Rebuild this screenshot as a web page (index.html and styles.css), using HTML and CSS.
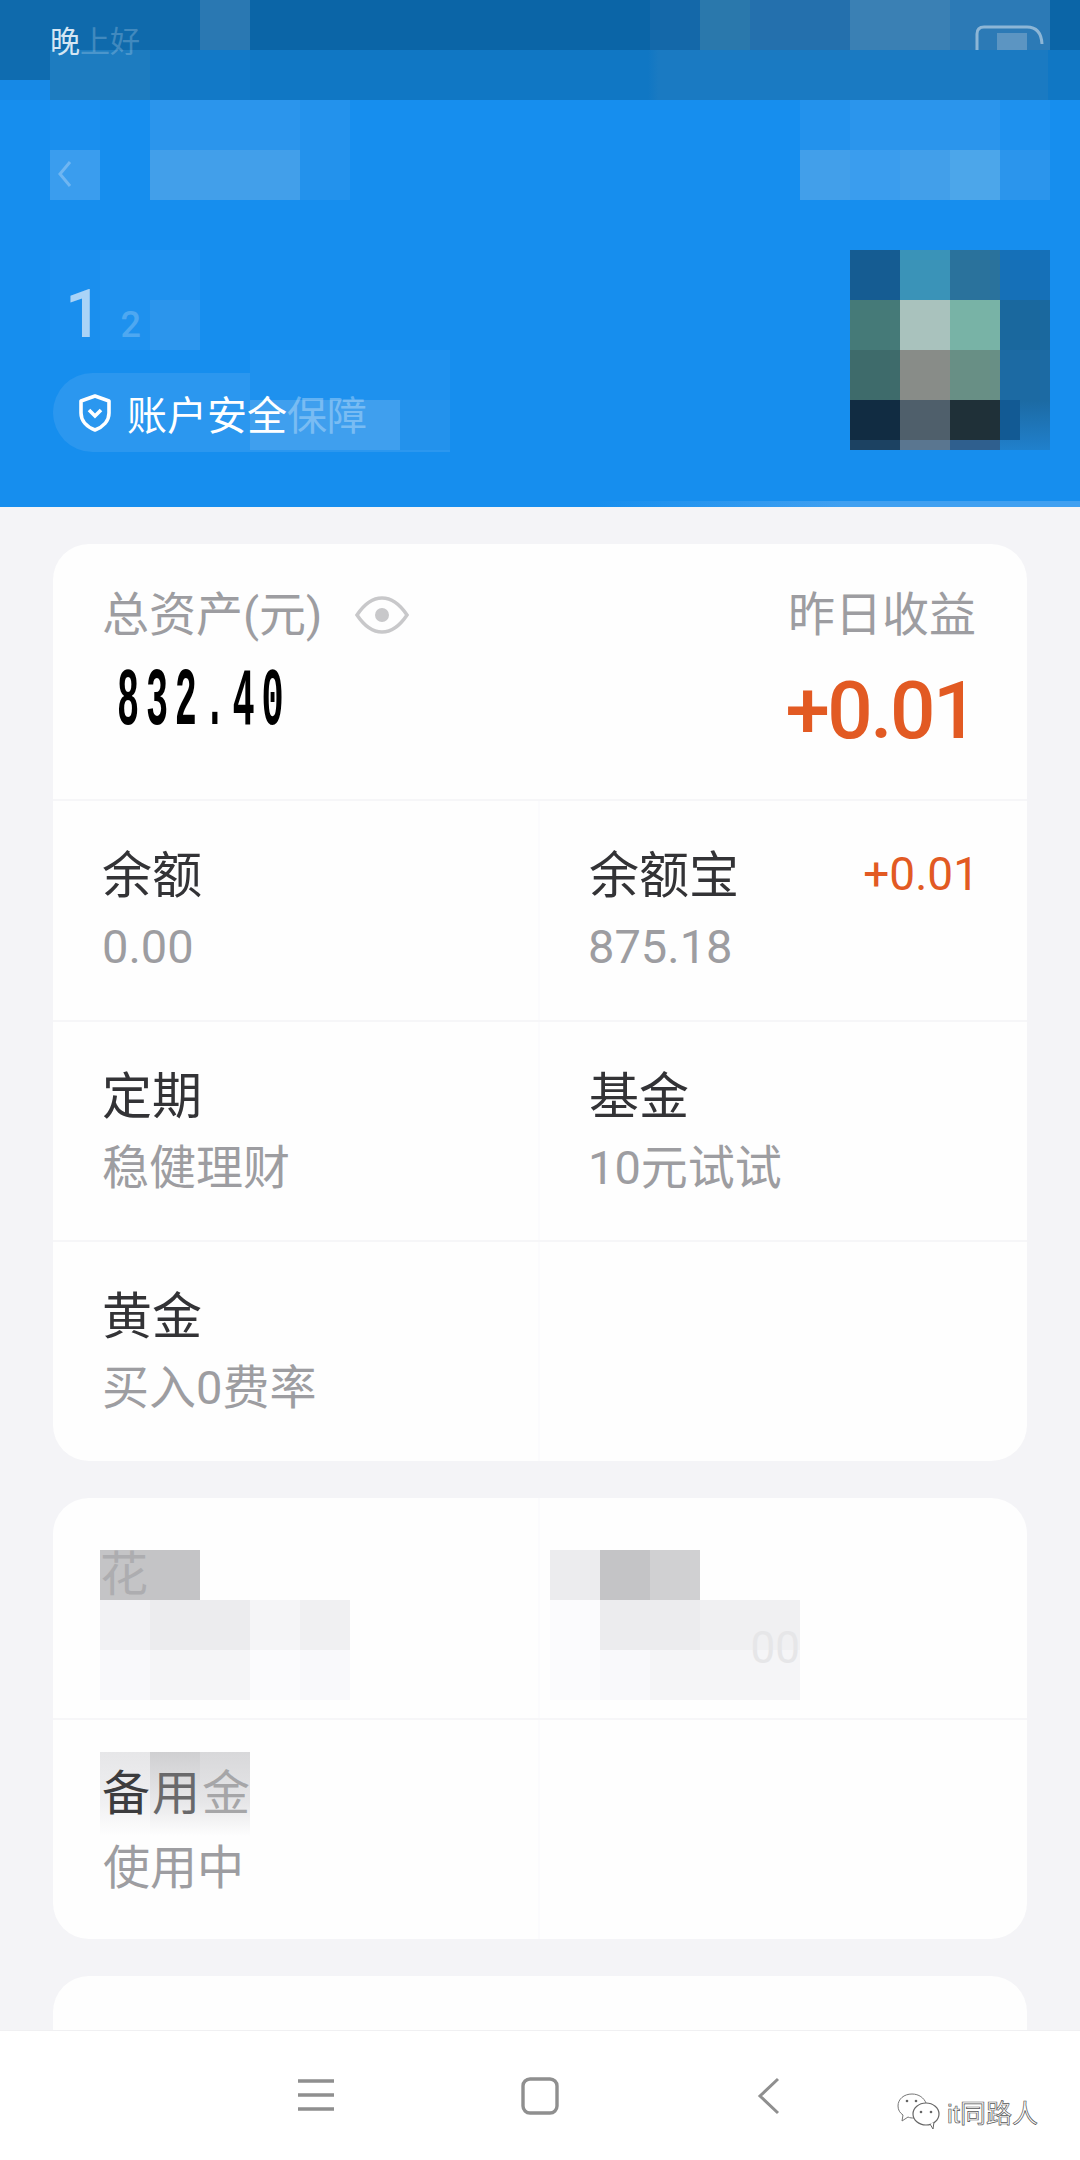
FILE: index.html
```html
<!DOCTYPE html><html lang="zh-CN">
<head>
  <meta charset="UTF-8">
  <title>总资产</title>
  <link rel="stylesheet" href="styles.css">
</head>
<body>
  <header class="top">
    <div class="statusbar">
      <div class="status-row">
        <div class="tile t-s1"></div><div class="tile t-s1 status-time">晚<span class="status-fade">上好</span></div><div class="tile t-s1"></div><div class="tile t-s1"></div><div class="tile t-s3"></div>
        <div class="status-gap"></div>
        <div class="tile t-s4"></div><div class="tile t-s5"></div><div class="tile t-s6"></div><div class="tile t-s6"></div><div class="tile t-s7"></div><div class="tile t-s7"></div>
        <div class="tile tile-wide t-s8">
          <svg class="battery" viewBox="0 0 70 26" width="70" height="26">
            <path d="M2 26 V10 Q2 3 9 3 H52 Q66 3 67 20" fill="none" stroke="#8db6d6" stroke-width="3"/>
            <rect x="22" y="9" width="30" height="17" fill="#5c95c2"/>
          </svg>
        </div>
      </div>
      <div class="status-row status-row-low">
        <div class="tile t-corner"></div><div class="tile t-s9"></div><div class="tile t-s9"></div><div class="tile t-s10"></div><div class="tile t-s10"></div>
      </div>
    </div>

    <div class="nav-blur">
      <div class="mosaic cols-6">
        <div class="tile t-b0"></div><div class="tile"></div><div class="tile t-b3"></div><div class="tile t-b3"></div><div class="tile t-b3"></div><div class="tile t-b2"></div>
        <div class="tile t-b4 back">
          <svg viewBox="0 0 14 28" width="14" height="28"><path d="M12 2 L2 14 L12 26" fill="none" stroke="#6fb6f2" stroke-width="3"/></svg>
        </div><div class="tile"></div><div class="tile t-b5"></div><div class="tile t-b5"></div><div class="tile t-b5"></div><div class="tile t-b2"></div>
      </div>
      <div class="mosaic cols-5">
        <div class="tile t-b2"></div><div class="tile t-b3"></div><div class="tile t-b3"></div><div class="tile t-b3"></div><div class="tile t-b1"></div>
        <div class="tile t-b5"></div><div class="tile t-b4"></div><div class="tile t-b5"></div><div class="tile t-b6"></div><div class="tile t-b3"></div>
      </div>
    </div>

    <div class="account">
      <div class="account-left">
        <div class="mosaic cols-3">
          <div class="tile t-b0"></div><div class="tile t-b1"></div><div class="tile t-b1"></div>
          <div class="tile t-b0 account-num">1<span class="account-rest">2</span></div><div class="tile t-b1"></div><div class="tile t-b3"></div>
        </div>
        <div class="pill">
          <svg class="shield" viewBox="0 0 34 38" width="34" height="38">
            <path d="M17 2 L31 7 V19 C31 27 25 33 17 36 C9 33 3 27 3 19 V7 Z" fill="none" stroke="#fff" stroke-width="3.6" stroke-linejoin="round"/>
            <path d="M11 16 L17 22 L23 16" fill="none" stroke="#fff" stroke-width="3.6"/>
          </svg>
          <span class="pill-text">账户安全<span class="pill-fade">保障</span></span>
          <div class="pill-blur">
            <div class="tile t-b1"></div><div class="tile t-b1"></div><div class="tile t-b1"></div><div class="tile t-b1"></div>
            <div class="tile t-b7"></div><div class="tile t-b7"></div><div class="tile t-b7"></div><div class="tile t-b2"></div>
          </div>
        </div>
      </div>
      <div class="mosaic cols-4 avatar">
        <div class="tile a1"></div><div class="tile a2"></div><div class="tile a3"></div><div class="tile a4"></div>
        <div class="tile a5"></div><div class="tile a6"></div><div class="tile a7"></div><div class="tile a8"></div>
        <div class="tile a9"></div><div class="tile a10"></div><div class="tile a11"></div><div class="tile a12"></div>
        <div class="tile a13"></div><div class="tile a14"></div><div class="tile a15"></div><div class="tile a16"></div>
      </div>
    </div>
  </header>

  <main class="content">
    <section class="card">
      <div class="summary">
        <div class="summary-line">
          <div class="summary-label">总资产(元)
            <svg class="eye" viewBox="0 0 54 38" width="54" height="38">
              <path d="M2 19 C10 7 18 2 27 2 C36 2 44 7 52 19 C44 31 36 36 27 36 C18 36 10 31 2 19 Z" fill="none" stroke="#c8c8ca" stroke-width="3.5"/>
              <circle cx="27" cy="19" r="7" fill="#c8c8ca"/>
            </svg>
          </div>
          <div class="summary-label">昨日收益</div>
        </div>
        <div class="summary-line summary-values">
          <div class="total">832.40</div>
          <div class="gain">+0.01</div>
        </div>
      </div>

      <div class="row">
        <div class="cell">
          <div class="cell-title">余额</div>
          <div class="cell-sub">0.00</div>
        </div>
        <div class="cell">
          <div class="cell-head"><div class="cell-title">余额宝</div><div class="cell-gain">+0.01</div></div>
          <div class="cell-sub">875.18</div>
        </div>
      </div>
      <div class="row">
        <div class="cell">
          <div class="cell-title">定期</div>
          <div class="cell-sub">稳健理财</div>
        </div>
        <div class="cell">
          <div class="cell-title">基金</div>
          <div class="cell-sub">10元试试</div>
        </div>
      </div>
      <div class="row">
        <div class="cell">
          <div class="cell-title">黄金</div>
          <div class="cell-sub">买入0费率</div>
        </div>
        <div class="cell"></div>
      </div>
    </section>

    <section class="card">
      <div class="row row-first">
        <div class="cell cell-blur">
          <div class="mosaic cols-5">
            <div class="tile g3 blur-char">花</div><div class="tile g3"></div><div class="tile"></div><div class="tile"></div><div class="tile"></div>
            <div class="tile g6"></div><div class="tile g1"></div><div class="tile g1"></div><div class="tile g2"></div><div class="tile g7"></div>
            <div class="tile g4"></div><div class="tile g2"></div><div class="tile g2"></div><div class="tile g8"></div><div class="tile g4"></div>
          </div>
        </div>
        <div class="cell cell-blur">
          <div class="mosaic cols-5">
            <div class="tile g1"></div><div class="tile g3"></div><div class="tile g5"></div><div class="tile"></div><div class="tile"></div>
            <div class="tile g8"></div><div class="tile g1"></div><div class="tile g1"></div><div class="tile g7"></div><div class="tile g7 blur-zero">00</div>
            <div class="tile g8"></div><div class="tile g4"></div><div class="tile g2"></div><div class="tile g2"></div><div class="tile g2"></div>
          </div>
        </div>
      </div>
      <div class="row">
        <div class="cell cell-spare">
          <div class="spare-title"><span class="spare-a">备</span><span class="spare-b">用</span><span class="spare-c">金</span></div>
          <div class="cell-sub">使用中</div>
        </div>
        <div class="cell"></div>
      </div>
    </section>

    <section class="card"></section>
  </main>

  <nav class="bottom">
    <svg viewBox="0 0 36 36" width="36" height="36">
      <path d="M0 4 H36 M0 18 H36 M0 32 H36" stroke="#8f8f8f" stroke-width="3.4"/>
    </svg>
    <svg viewBox="0 0 38 38" width="38" height="38">
      <rect x="2" y="2" width="34" height="34" rx="7" fill="none" stroke="#8f8f8f" stroke-width="3.4"/>
    </svg>
    <svg viewBox="0 0 24 38" width="24" height="38">
      <path d="M21 2 L3 19 L21 36" fill="none" stroke="#8f8f8f" stroke-width="3"/>
    </svg>
    <div class="watermark">
      <svg viewBox="0 0 44 38" width="44" height="38">
        <path d="M16 2 C8 2 2 7 2 14 C2 18 4 21 7 23 L6 29 L12 25 C14 26 16 26 18 26" fill="#fff" stroke="#777" stroke-width="1"/>
        <path d="M16 2 C23 2 28 6 30 11" fill="none" stroke="#777" stroke-width="1"/>
        <ellipse cx="30" cy="22" rx="13" ry="11" fill="#fff" stroke="#666" stroke-width="1.2"/>
        <path d="M34 32 L37 37 L38 30" fill="#fff" stroke="#666" stroke-width="1"/>
        <circle cx="11" cy="9" r="1.3" fill="#666"/><circle cx="20" cy="9" r="1.3" fill="#666"/>
        <circle cx="25" cy="20" r="1.3" fill="#666"/><circle cx="35" cy="20" r="1.3" fill="#666"/>
      </svg>
      <span class="watermark-text">it同路人</span>
    </div>
  </nav>
</body>
</html>
```

FILE: styles.css
```css
* {
  box-sizing: border-box;
}
body {
  margin: 0;
  width: 1080px;
  height: 2160px;
  display: flex;
  flex-direction: column;
  overflow: hidden;
  background: #f4f4f7;
  font-family: Roboto, "Noto Sans CJK SC", sans-serif;
  color: #333336;
}

/* pixelated blocks, all on a 50px raster */
.mosaic {
  display: grid;
  grid-auto-rows: 50px;
}
.cols-3 { grid-template-columns: repeat(3, 50px); }
.cols-4 { grid-template-columns: repeat(4, 50px); }
.cols-5 { grid-template-columns: repeat(5, 50px); }
.cols-6 { grid-template-columns: repeat(6, 50px); }
.tile {
  width: 50px;
  height: 50px;
  flex: none;
}
.tile-wide {
  width: 100px;
}

/* header */
.top {
  height: 507px;
  flex: none;
  background: linear-gradient(to right, transparent 55%, #40a0f1 78%) bottom / 100% 6px no-repeat, #168eee;
}
.statusbar {
  height: 100px;
  background: linear-gradient(#0b65a7 0, #0b65a7 50px, #1077c4 50px, #1077c4 100px);
}
.status-row {
  display: flex;
  height: 50px;
}
.status-gap {
  width: 400px;
}
.status-time {
  position: relative;
  z-index: 1;
  color: #d5e6f3;
  font-size: 30px;
  line-height: 30px;
  padding-top: 27px;
  white-space: nowrap;
}
.status-fade {
  opacity: 0.25;
}
.battery {
  display: block;
  margin: 24px 0 0 25px;
}
.t-s1 { background: #0f6aac; }
.t-s3 { background: #2a78b2; }
.t-s4 { background: #1468a9; }
.t-s5 { background: #2a78ac; }
.t-s6 { background: #2470ad; }
.t-s7 { background: #3a80b4; }
.t-s8 { background: #2c7ab6; }
.t-s9 { background: #1d7cc0; }
.t-s10 { background: #1279c7; }
.t-corner { background: linear-gradient(#0f6cb0 0, #0f6cb0 30px, #1689e6 30px); }
.status-row-low {
  background: linear-gradient(to right, #1077c4 60%, #1a7ac2 61%, #1a7ac2 97%, #1077c4 97%);
}
.t-b0 { background: #1a8fee; }
.t-b1 { background: #1e91ee; }
.t-b2 { background: #2392ec; }
.t-b3 { background: #2b95ec; }
.t-b4 { background: #3a9dee; }
.t-b5 { background: #429fea; }
.t-b6 { background: #4ca6ea; }
.t-b7 { background: #3f9fee; }

.nav-blur {
  display: flex;
  justify-content: space-between;
  padding: 0 30px 0 50px;
}
.back svg {
  display: block;
  margin: 10px 0 0 8px;
}
.account {
  display: flex;
  justify-content: space-between;
  padding: 50px 30px 0 50px;
}
.account-num {
  position: relative;
  z-index: 1;
  color: #a9d3f7;
  font-size: 66px;
  font-weight: 500;
  line-height: 30px;
  padding: 0 0 0 15px;
  white-space: nowrap;
}
.account-rest {
  margin-left: 18px;
  font-size: 36px;
  opacity: 0.35;
}
.pill {
  position: relative;
  display: flex;
  align-items: center;
  width: 397px;
  height: 79px;
  margin: 23px 0 0 3px;
  padding-left: 25px;
  border-radius: 40px 0 0 40px;
  background: #2b97ef;
}
.pill-blur {
  position: absolute;
  left: 197px;
  top: -23px;
  display: grid;
  grid-template-columns: repeat(4, 50px);
  grid-auto-rows: 50px;
}
.shield {
  position: relative;
  z-index: 1;
  flex: none;
}
.pill-text {
  position: relative;
  z-index: 1;
  margin-left: 15px;
  font-size: 40px;
  color: #fff;
}
.pill-fade {
  opacity: 0.3;
}
.a1 { background: #155c92; }
.a2 { background: #3a93b8; }
.a3 { background: #2a729c; }
.a4 { background: #1570b8; }
.a5 { background: #457a78; }
.a6 { background: #a9c2bd; }
.a7 { background: #78b3a6; }
.a8 { background: #1a689e; }
.a9 { background: #3e6b6b; }
.a10 { background: #888c88; }
.a11 { background: #688f85; }
.a12 { background: #1c6aa3; }
.a13 { background: linear-gradient(#112c42 80%, #1c4262 80%); }
.a14 { background: linear-gradient(#4f5f6b 80%, #5a7690 80%); }
.a15 { background: linear-gradient(#1f3038 80%, #2f5f8e 80%); }
.a16 { background: linear-gradient(to right, #125a94 40%, transparent 40%) top left / 100% 80% no-repeat, linear-gradient(#1c6aa3, #2080cc); }

/* cards */
.content {
  flex: 1;
  overflow: hidden;
  padding: 37px 53px 0;
}
.card {
  background: #fefefe;
  border-radius: 36px;
  margin-bottom: 37px;
}
.card:last-child {
  height: 120px;
  margin-bottom: 0;
}
.summary {
  height: 255px;
  padding: 43px 51px 0 49px;
}
.summary-line {
  display: flex;
  justify-content: space-between;
}
.summary-label {
  display: flex;
  align-items: center;
  font-size: 47px;
  line-height: 56px;
  color: #9d9da1;
}
.eye {
  margin-left: 33px;
}
.summary-values {
  align-items: flex-start;
}
.total {
  width: 260px;
  margin: 15px 0 0 15px;
  font-family: "Liberation Mono", monospace;
  font-weight: 700;
  font-size: 82px;
  line-height: 90px;
  letter-spacing: 15px;
  color: #000;
  transform: scaleX(0.45);
  transform-origin: left center;
}
.gain {
  font-size: 80px;
  font-weight: 500;
  line-height: 90px;
  letter-spacing: -2.5px;
  margin-top: 23px;
  color: #e25a23;
}
.row {
  display: flex;
  height: 220.5px;
  border-top: 2px solid #f6f6f8;
}
.row-first {
  border-top: none;
}
.cell {
  width: 487px;
  padding: 43px 48px 0 49px;
}
.cell:first-child {
  border-right: 2px solid #fbfbfd;
}
.cell-head {
  display: flex;
  justify-content: space-between;
  align-items: center;
}
.cell-title {
  font-size: 50px;
  line-height: 64px;
}
.cell-gain {
  margin-top: -5px;
  font-size: 46px;
  color: #e25a23;
}
.cell-sub {
  margin-top: 9px;
  font-size: 47px;
  line-height: 60px;
  color: #9d9da1;
}
.cell:last-child .cell-sub {
  margin-left: -1px;
}
.cell-blur {
  padding: 52px 0 0 47px;
}
.cell-blur:last-child {
  padding-left: 10px;
}
.g1 { background: #ececee; }
.g2 { background: #f5f5f7; }
.g3 { background: #c4c4c6; }
.g4 { background: #f9f9fb; }
.g5 { background: #d0d0d2; }
.g6 { background: #f2f2f4; }
.g7 { background: #f0f0f2; }
.g8 { background: #fbfbfd; }
.blur-char {
  position: relative;
  z-index: 1;
  font-size: 48px;
  line-height: 50px;
  color: #adadb0;
}
.blur-zero {
  position: relative;
  z-index: 1;
  font-size: 44px;
  line-height: 52px;
  padding-top: 22px;
  text-align: right;
  color: #e6e6e8;
}
.cell-spare {
  padding: 32px 0 0 47px;
}
.spare-title {
  display: flex;
}
.spare-title span {
  display: block;
  width: 50px;
  height: 84px;
  padding-left: 2px;
  font-size: 48px;
  line-height: 84px;
}
.spare-a {
  background: linear-gradient(#e6e6e8 0, #f0f0f2 60%, #fefefe);
  color: #3c3c3e;
}
.spare-b {
  background: linear-gradient(#cfcfd1 0, #e8e8ea 60%, #fefefe);
  color: #69696b;
}
.spare-c {
  background: linear-gradient(#d8d8da 0, #e6e6e8 60%, #fefefe);
  color: #a6a6a8;
}
.cell-spare .cell-sub {
  margin-top: 2px;
  padding-left: 3px;
}

/* bottom bar */
.bottom {
  position: relative;
  flex: none;
  height: 130px;
  display: flex;
  align-items: flex-start;
  padding: 46px 0 0 298px;
  background: #fff;
  border-top: 1px solid #f0f0f2;
}
.bottom svg:nth-child(2) {
  margin-left: 187px;
}
.bottom svg:nth-child(3) {
  margin-left: 198px;
}
.watermark {
  position: absolute;
  left: 896px;
  top: 61px;
  display: flex;
  align-items: center;
}
.watermark svg {
  margin: 0;
}
.watermark-text {
  margin-left: 7px;
  font-family: "Liberation Sans", "Noto Sans CJK SC", sans-serif;
  font-size: 26px;
  color: #fff;
  -webkit-text-stroke: 0.7px #555;
}
```
